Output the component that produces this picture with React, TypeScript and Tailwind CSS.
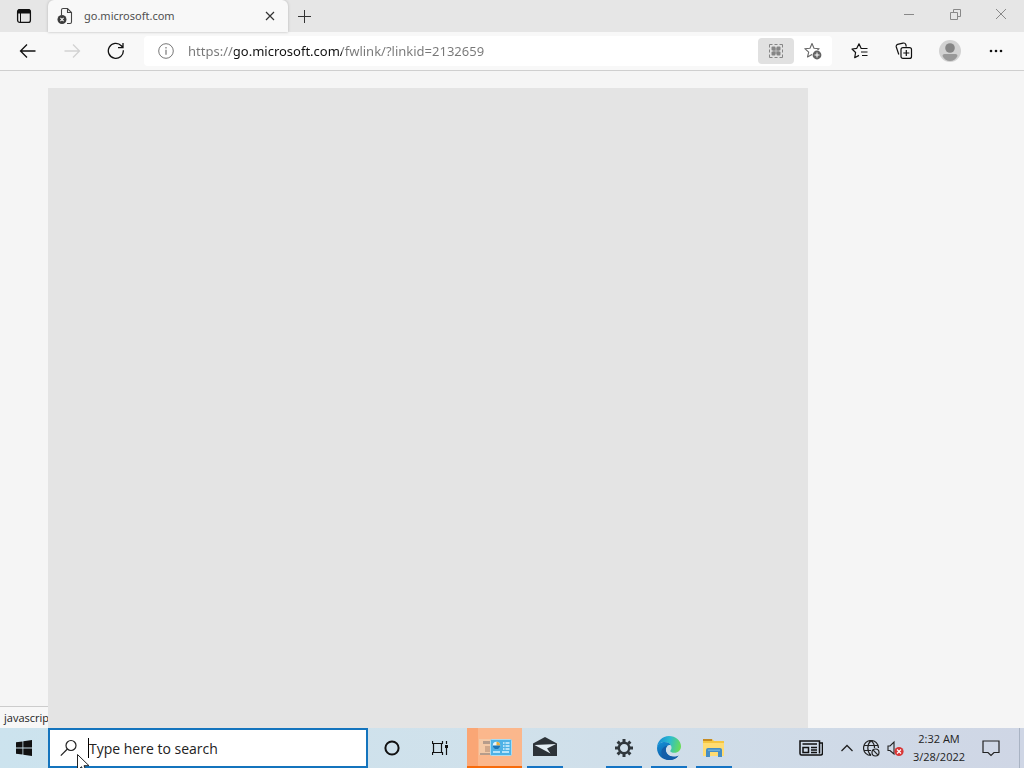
import type { ReactNode } from "react";

type IconButtonProps = {
  label: string;
  className?: string;
  disabled?: boolean;
  children: ReactNode;
};

function IconButton({ label, className = "", disabled, children }: IconButtonProps) {
  return (
    <button
      type="button"
      aria-label={label}
      disabled={disabled}
      className={`flex shrink-0 items-center justify-center ${className}`}
    >
      {children}
    </button>
  );
}

function TabStrip() {
  return (
    <div className="flex h-8 items-stretch bg-[#e6e6e6]">
      <IconButton label="Tab actions" className="w-12">
        <svg width="16" height="16" viewBox="0 0 16 16">
          <rect x="1.6" y="1.6" width="12.8" height="12.8" rx="2.2" fill="none" stroke="#111" strokeWidth="1.3" />
          <path d="M1.500 5.500V3.200Q1.500 1 3.700 1h8.600q2.200 0 2.200 2.200v2.300z" fill="#111" />
          <path d="M4.500 5v9.500" stroke="#111" strokeWidth="1" />
        </svg>
      </IconButton>
      <div className="flex w-60 items-center rounded-t-md bg-[#f8f8f8] pl-2 pr-2 shadow-[0_0_3px_#b4b4b4]">
        <svg className="shrink-0" width="18" height="18" viewBox="0 0 18 18">
          <path d="M5.500 8V3q0-1.500 1.500-1.500h4.500l4 4V15q0 1.500-1.500 1.500h-3M11.500 1.500v4h4" fill="none" stroke="#444" strokeWidth="1.100" />
          <circle cx="6" cy="12.500" r="4.500" fill="#3c3c3c" />
          <path d="m4.400 10.900 3.200 3.200m0-3.200-3.200 3.200" stroke="#fff" strokeWidth="1.100" />
        </svg>
        <span className="ml-2.5 grow truncate font-['Noto_Sans',sans-serif] text-[11px] text-[#505050]">go.microsoft.com</span>
        <IconButton label="Close tab" className="size-5">
          <svg width="10" height="10" viewBox="0 0 10 10">
            <path d="m1 1 8 8m0-8L1 9" stroke="#333" strokeWidth="1.200" />
          </svg>
        </IconButton>
      </div>
      <IconButton label="New tab" className="w-8">
        <svg width="15" height="15" viewBox="0 0 15 15">
          <path d="M7.500 1v13M1 7.500h13" stroke="#333" />
        </svg>
      </IconButton>
      <div className="ml-auto flex pb-1">
        <IconButton label="Minimize" className="w-[46px]">
          <svg width="10" height="10" viewBox="0 0 10 10">
            <path d="M0 5.500h10" stroke="#888" />
          </svg>
        </IconButton>
        <IconButton label="Restore" className="w-[46px]">
          <svg width="11" height="11" viewBox="0 0 11 11">
            <path d="M.5 3.500h7v7h-7zM3.500 3.500v-3h7v7h-3" fill="none" stroke="#888" />
          </svg>
        </IconButton>
        <IconButton label="Close" className="w-[46px]">
          <svg width="12" height="12" viewBox="0 0 12 12">
            <path d="m1 1 10 10m0-10L1 11" stroke="#888" />
          </svg>
        </IconButton>
      </div>
    </div>
  );
}

function Toolbar() {
  return (
    <div className="flex h-[39px] items-center border-b border-[#cfcfcf] bg-[#f8f8f8] pl-1.5 pr-1.5">
      <IconButton label="Back" className="w-11">
        <svg width="18" height="16" viewBox="0 0 18 16" fill="none" stroke="#111" strokeWidth="1.300">
          <path d="M16.500 8H1.500M8 1.500 1.500 8 8 14.500" />
        </svg>
      </IconButton>
      <IconButton label="Forward" className="w-11" disabled>
        <svg width="18" height="16" viewBox="0 0 18 16" fill="none" stroke="#d2d2d2" strokeWidth="1.300">
          <path d="M1.500 8h15M10 1.500 16.500 8 10 14.500" />
        </svg>
      </IconButton>
      <IconButton label="Refresh" className="w-11">
        <svg width="18" height="18" viewBox="0 0 18 18" fill="none" stroke="#111" strokeWidth="1.300">
          <path d="M16.300 8.200A7.500 7.500 0 1 1 14.300 3.700L16 5.500M16 1v4.700h-5" />
        </svg>
      </IconButton>
      <div className="ml-1.5 flex h-[30px] min-w-0 grow items-center rounded bg-white">
        <IconButton label="View site information" className="w-11">
          <svg width="16" height="16" viewBox="0 0 16 16" fill="none" stroke="#777">
            <circle cx="8" cy="8" r="7.300" />
            <path d="M8 6.800v5M8 4v1.400" strokeWidth="1.200" />
          </svg>
        </IconButton>
        <input
          type="text"
          aria-label="Address bar"
          defaultValue="https://go.microsoft.com/fwlink/?linkid=2132659"
          className="h-7 min-w-0 grow bg-[linear-gradient(to_right,#777777_46px,#111111_46px,#111111_154px,#777777_154px)] bg-clip-text font-['Noto_Sans',sans-serif] text-[13px] text-transparent caret-black outline-none"
        />
        <IconButton label="Apps" className="h-[26px] w-9 rounded-sm bg-[#e1e1e1]">
          <svg width="16" height="16" viewBox="0 0 16 16">
            <path d="M1.500 4.500v-3h3M11.500 1.500h3v3M14.500 11.500v3h-3M4.500 14.500h-3v-3M6.500 1.500h3M6.500 14.500h3M1.500 6.500v3M14.500 6.500v3" fill="none" stroke="#858585" />
            <g fill="#858585">
              <rect x="3.500" y="3.500" width="4" height="4" rx="1" />
              <rect x="8.500" y="3.500" width="4" height="4" rx="1" />
              <rect x="3.500" y="8.500" width="4" height="4" rx="1" />
              <rect x="8.500" y="8.500" width="4" height="4" rx="1" />
              <rect x="5" y="5" width="6" height="6" opacity="0.500" />
            </g>
          </svg>
        </IconButton>
        <IconButton label="Add this page to favorites" className="w-[38px]">
          <svg width="18" height="18" viewBox="0 0 18 18">
            <path d="m8 1.500 2 4.700 5.200.5-3.900 3.500L12.500 15 8 12.400 3.500 15l1.200-4.800L.8 6.700 6 6.200z" fill="none" stroke="#666" strokeWidth="1.100" strokeLinejoin="round" />
            <circle cx="13" cy="13" r="5" fill="#fff" />
            <circle cx="13" cy="13" r="4.400" fill="#626262" />
            <path d="M13 10.500v5M10.500 13h5" stroke="#fff" />
          </svg>
        </IconButton>
      </div>
      <div className="ml-1.5 flex items-center">
        <IconButton label="Favorites" className="w-11">
          <svg width="18" height="18" viewBox="0 0 18 18" fill="none" stroke="#111" strokeWidth="1.200" strokeLinejoin="round">
            <path d="M16.500 6.500H10.200L8 1.800 5.800 6.300 1 7l3.600 3.500-.9 5.200L8 13.400M10 10h6.500M11 13.500h5.500" />
          </svg>
        </IconButton>
        <IconButton label="Collections" className="w-11">
          <svg width="18" height="18" viewBox="0 0 18 18" fill="none" stroke="#111" strokeWidth="1.200">
            <path d="M3.800 12.500 1.300 5Q.8 3 2.600 2.400L8 1.100q2-.5 2.700 1.200l.6 2.300" />
            <rect x="6" y="5.600" width="10.500" height="10.800" rx="2" />
            <path d="M11.300 8v6M8.300 11h6" />
          </svg>
        </IconButton>
        <IconButton label="Profile" className="w-12">
          <svg width="22" height="22" viewBox="0 0 22 22">
            <circle cx="11" cy="11" r="11" fill="#d2d2d2" />
            <circle cx="11" cy="8" r="4.800" fill="#858585" />
            <path d="M3.500 16q0-2 2-2h11q2 0 2 2-2.500 5-7.500 5t-7.500-5z" fill="#999" />
          </svg>
        </IconButton>
        <IconButton label="Settings and more" className="w-11">
          <svg width="14" height="4" viewBox="0 0 14 4" fill="#111">
            <circle cx="2" cy="2" r="1.300" />
            <circle cx="7" cy="2" r="1.300" />
            <circle cx="12" cy="2" r="1.300" />
          </svg>
        </IconButton>
      </div>
    </div>
  );
}

function PageArea() {
  return (
    <main className="relative grow overflow-hidden bg-[#f5f5f5]">
      <div className="absolute bottom-0 left-0 border-t border-r border-[#cccccc] bg-[#f7f7f7] py-0.5 pl-1 pr-2 text-[11px] leading-[17px] text-[#222222]">
        javascript:void(0)
      </div>
      <section aria-label="Search results" className="absolute bottom-0 left-12 top-[17px] w-[760px] max-w-full bg-[#e4e4e4]" />
    </main>
  );
}

function CortanaIcon() {
  return (
    <svg width="16" height="16" viewBox="0 0 16 16">
      <circle cx="8" cy="8" r="6.600" fill="none" stroke="#111" strokeWidth="2" />
    </svg>
  );
}

function TaskViewIcon() {
  return (
    <svg width="16" height="16" viewBox="0 0 16 16" fill="none" stroke="#111">
      <path d="M.5 1v2.500h10V1M.5 15v-2.500h10V15M1.500 3.500v9M9.500 3.500v9M14.500 1v3M14.500 8v7" strokeWidth="1.200" />
      <path d="M13 5h3v3h-3z" fill="#111" stroke="none" />
    </svg>
  );
}

function ControlPanelIcon() {
  return (
    <svg width="36" height="20" viewBox="0 0 36 20">
      <rect x="2" y="2" width="20" height="16" fill="#f3c9a6" />
      <path d="M6 4h8v3H6zM3 16h11v2H3z" fill="#b59c8b" />
      <path d="M8 9h6v6H8z" fill="#d0a88b" />
      <rect x="13.500" y="2.500" width="21" height="16" rx="1" fill="#4db2e6" stroke="#a9dcf2" />
      <circle cx="19.500" cy="8.500" r="3.700" fill="#e6f6fc" />
      <path d="M19.500 8.500V4.800a3.700 3.700 0 0 1 3.700 3.700z" fill="#e9b042" />
      <path d="M19.500 8.500h3.700a3.700 3.700 0 1 1-7.400 0z" fill="#1c76b8" />
      <path d="M26 6h1.500m1 0h4M26 9h1.500m1 0h4M26 12h1.500m1 0h4M16 15h7m2 0h7" stroke="#d9f3ff" strokeWidth="1.300" />
    </svg>
  );
}

function MailIcon() {
  return (
    <svg width="24" height="20" viewBox="0 0 24 20">
      <path d="M0 6.500 12 0l12 6.500V19H0z" fill="#2d3338" />
      <path d="M1.500 8 23 7l-9 4.500 3.500 5L9 12z" fill="#e3edf3" />
    </svg>
  );
}

function GearIcon() {
  return (
    <svg width="18" height="18" viewBox="0 0 18 18" fill="none" stroke="#30373c">
      <circle cx="9" cy="9" r="5.200" strokeWidth="2.400" />
      <path d="M9 0v3M9 15v3M0 9h3M15 9h3M2.600 2.600l2.200 2.200M13.200 13.200l2.200 2.200M15.400 2.600l-2.200 2.200M4.800 13.200l-2.200 2.200" strokeWidth="3" />
    </svg>
  );
}

function EdgeIcon() {
  return (
    <svg width="24" height="24" viewBox="0 0 24 24">
      <defs>
        <linearGradient id="edge-wave" x1="0" y1="0.300" x2="1" y2="0.500">
          <stop offset="0" stopColor="#1688d5" />
          <stop offset="0.500" stopColor="#2cbcd0" />
          <stop offset="1" stopColor="#68dc58" />
        </linearGradient>
        <linearGradient id="edge-body" x1="0" y1="0" x2="0.600" y2="1">
          <stop offset="0" stopColor="#1593d8" />
          <stop offset="1" stopColor="#0c4e9d" />
        </linearGradient>
      </defs>
      <path d="M0 12C0 5 5.500 0 12 0s12 4.500 12 10.300c0 4-3 6.500-6.400 6.500-2.700 0-4.300-1-4.300-1.900 0-.6 1.200-1.200 1.200-3.100C14.500 8.500 11.500 6 7.700 6 3.500 6 .3 9 0 12z" fill="url(#edge-wave)" />
      <path d="M0 12c.3-3.800 3.500-6 7.500-6 3.600 0 5.800 1.800 6.600 3.500C10.500 8 8.800 11 8.800 13.700c0 4.300 4 7 8.100 7 2.200 0 3.800-.7 4.700-1.300C19.500 22.300 16 24 12 24 5 24 0 18.500 0 12z" fill="url(#edge-body)" />
      <path d="M8.800 14c0-2 .7-3.600 2-4.300-4 .4-7 3.500-6.300 7.500.6 3.900 4 6.700 7.900 6.700 4 0 7.200-1.600 9.200-4.500-1 .8-2.700 1.300-4.700 1.300-4.100 0-8.100-2.400-8.100-6.700z" fill="#145da8" />
    </svg>
  );
}

function FolderIcon() {
  return (
    <svg width="22" height="20" viewBox="0 0 22 20">
      <path d="M0 1h9l2 2h10v15H0z" fill="#f5c642" />
      <path d="M0 1h9v2H0z" fill="#c68b22" />
      <path d="M0 5h21v13H0z" fill="#ffdc72" />
      <path d="M3 19v-7q0-2 2-2h12q2 0 2 2v7h-4v-5H7v5z" fill="#468dc2" />
      <path d="M5 11.500h12v1.500H5z" fill="#69add9" />
    </svg>
  );
}

const openApps = [
  { name: "Settings", icon: <GearIcon /> },
  { name: "Microsoft Edge", icon: <EdgeIcon /> },
  { name: "File Explorer", icon: <FolderIcon /> },
];

function Taskbar() {
  return (
    <footer className="flex h-10 shrink-0 items-stretch bg-linear-to-r from-[#cce3ee] via-[#d0e1eb] to-[#cfd6e5]">
      <IconButton label="Start" className="w-12">
        <svg width="16" height="16" viewBox="0 0 16 16" fill="#111">
          <path d="m0 2.300 6.500-.9v6.200H0zM7.300 1.300 16 0v7.600H7.300zM0 8.400h6.500v6.200L0 13.700zM7.300 8.400H16V16l-8.700-1.300z" />
        </svg>
      </IconButton>
      <label className="flex w-80 min-w-0 items-center border-2 border-[#1474bd] bg-white pl-2.5">
        <svg className="shrink-0" width="18" height="18" viewBox="0 0 18 18" fill="none" stroke="#222" strokeWidth="1.200">
          <circle cx="11" cy="6.500" r="5" />
          <path d="m7.400 10-6.600 6.700" />
        </svg>
        <span className="ml-2.5 h-5 w-px shrink-0 bg-black" />
        <input
          type="text"
          aria-label="Search"
          placeholder="Type here to search"
          className="h-8 min-w-0 grow bg-transparent text-sm text-[#222222] outline-none placeholder:text-[#222222]"
        />
      </label>
      <IconButton label="Cortana" className="w-12">
        <CortanaIcon />
      </IconButton>
      <IconButton label="Task View" className="w-12">
        <TaskViewIcon />
      </IconButton>
      <IconButton label="Control Panel" className="ml-[3px] w-[55px] border-b-2 border-[#f76b0b] bg-linear-to-r from-[#faa675] from-20% to-[#fbb78c] to-20%">
        <ControlPanelIcon />
      </IconButton>
      <IconButton label="Mail" className="ml-[5px] w-9 border-b-2 border-[#1474c4]">
        <MailIcon />
      </IconButton>
      <div className="ml-[43px] flex gap-[9px]">
        {openApps.map((app) => (
          <IconButton key={app.name} label={app.name} className="w-9 border-b-2 border-[#1474c4] pt-0.5">
            {app.icon}
          </IconButton>
        ))}
      </div>
      <div className="ml-auto flex items-stretch">
        <IconButton label="News and interests" className="w-12">
          <svg width="24" height="16" viewBox="0 0 24 16" fill="none" stroke="#111" strokeWidth="1.500">
            <path d="M20.500 13.500V1H1v12.500q0 1.500 1.500 1.500h19q2 0 2-2V3h-3" />
            <path d="M3.500 4h14.500M12 7.500h6M12 10h6M12 12.500h6M4 7.500h5.500v5H4z" />
          </svg>
        </IconButton>
        <IconButton label="Show hidden icons" className="w-6">
          <svg width="12" height="8" viewBox="0 0 12 8" fill="none" stroke="#222" strokeWidth="1.300">
            <path d="m.5 7 5.500-5.500L11.500 7" />
          </svg>
        </IconButton>
        <IconButton label="Network: not connected" className="w-6">
          <svg width="17" height="17" viewBox="0 0 17 17" fill="none" stroke="#222" strokeWidth="1.200">
            <path d="M8 15.500A7.500 7.500 0 1 1 15.500 8M8 15.500C3.500 11 4 4 8 .7c2.300 1.500 3.500 4 3.500 7.300M1.500 5.500h13M1.500 10.500H8" />
            <circle cx="12.500" cy="12.500" r="3.500" />
            <path d="m10.200 10.200 4.600 4.600" />
          </svg>
        </IconButton>
        <IconButton label="Volume: unavailable" className="w-6">
          <svg width="17" height="17" viewBox="0 0 17 17">
            <path d="M1 6h2l4-4v12l-4-3.500H1z" fill="none" stroke="#222" strokeWidth="1.100" />
            <circle cx="12" cy="11.500" r="4.600" fill="#d83636" />
            <path d="m10 9.500 4 4m0-4-4 4" stroke="#fff" strokeWidth="1.200" />
          </svg>
        </IconButton>
        <button type="button" className="w-16 text-center text-[11px] leading-[18px] text-[#222222]">
          <span className="block">2:32 AM</span>
          <span className="block">3/28/2022</span>
        </button>
        <IconButton label="Notifications" className="w-10">
          <svg width="18" height="18" viewBox="0 0 18 18" fill="none" stroke="#222" strokeWidth="1.200">
            <path d="M1 2h16v11.500h-5L9 16.500l-3-3H1z" />
          </svg>
        </IconButton>
        <IconButton label="Show desktop" className="ml-2 w-[5px] border-l border-[#a9b3c3]">
          {null}
        </IconButton>
      </div>
    </footer>
  );
}

function MousePointer() {
  return (
    <svg aria-hidden="true" className="pointer-events-none absolute left-[77px] top-[754px]" width="13" height="20" viewBox="0 0 13 20">
      <path d="M.5.500v16l4-3.800 2.500 6 2.500-1-2.500-6h5z" fill="#fff" stroke="#222" />
    </svg>
  );
}

export default function App() {
  return (
    <div className="relative flex h-screen flex-col overflow-hidden font-['Open_Sans','Noto_Sans',sans-serif]">
      <header>
        <TabStrip />
        <Toolbar />
      </header>
      <PageArea />
      <Taskbar />
      <MousePointer />
    </div>
  );
}
